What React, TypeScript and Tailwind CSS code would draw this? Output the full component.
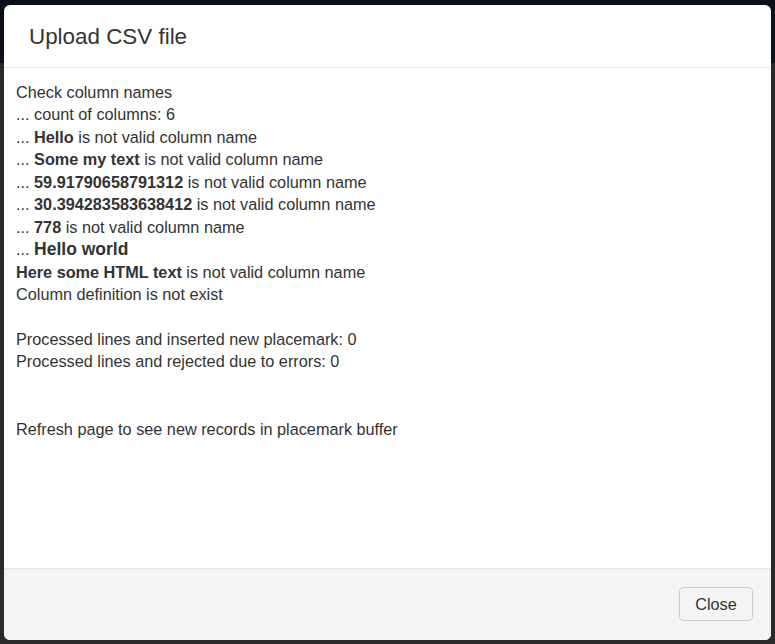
export default function App() {
  return (
    <main
      className="relative h-[644px] w-[775px] overflow-hidden bg-[#2a2a2a] text-[#333]"
      style={{ fontFamily: '"Liberation Sans", Arial, sans-serif' }}
    >
      {/* page behind the backdrop */}
      <div className="h-[63px] bg-[#0b0f19]" />

      <div className="absolute left-[4px] top-[5px] flex h-[635px] w-[767px] flex-col overflow-hidden rounded-[6px] bg-white">
        <div className="flex h-[63px] items-center border-b border-[#e5e5e5] px-[25px] pt-[1px]">
          <h4 className="text-[22.4px] leading-[1.4]">Upload CSV file</h4>
        </div>

        <div className="flex-1 px-[12px] pt-[13px] text-[16.25px] leading-[22.45px]">
          Check column names
          <br />
          ... count of columns: 6
          <br />
          ... <b>Hello</b> is not valid column name
          <br />
          ... <b>Some my text</b> is not valid column name
          <br />
          ... <b>59.91790658791312</b> is not valid column name
          <br />
          ... <b>30.394283583638412</b> is not valid column name
          <br />
          ... <b>778</b> is not valid column name
          <br />
          ... <b className="text-[17.5px]">Hello world</b>
          <br />
          <b>Here some HTML text</b> is not valid column name
          <br />
          Column definition is not exist
          <br />
          <br />
          Processed lines and inserted new placemark: 0
          <br />
          Processed lines and rejected due to errors: 0
          <br />
          <br />
          <br />
          Refresh page to see new records in placemark buffer
        </div>

        <div className="flex justify-end border-t border-[#e5e5e5] bg-[#f4f4f4] px-[18px] pb-[19px] pt-[18px]">
          <button className="h-[34px] w-[74px] rounded-[4px] border border-[#ccc] bg-[#f4f4f4] pt-[1px] text-[16.25px] text-[#333]">
            Close
          </button>
        </div>
      </div>
    </main>
  );
}
